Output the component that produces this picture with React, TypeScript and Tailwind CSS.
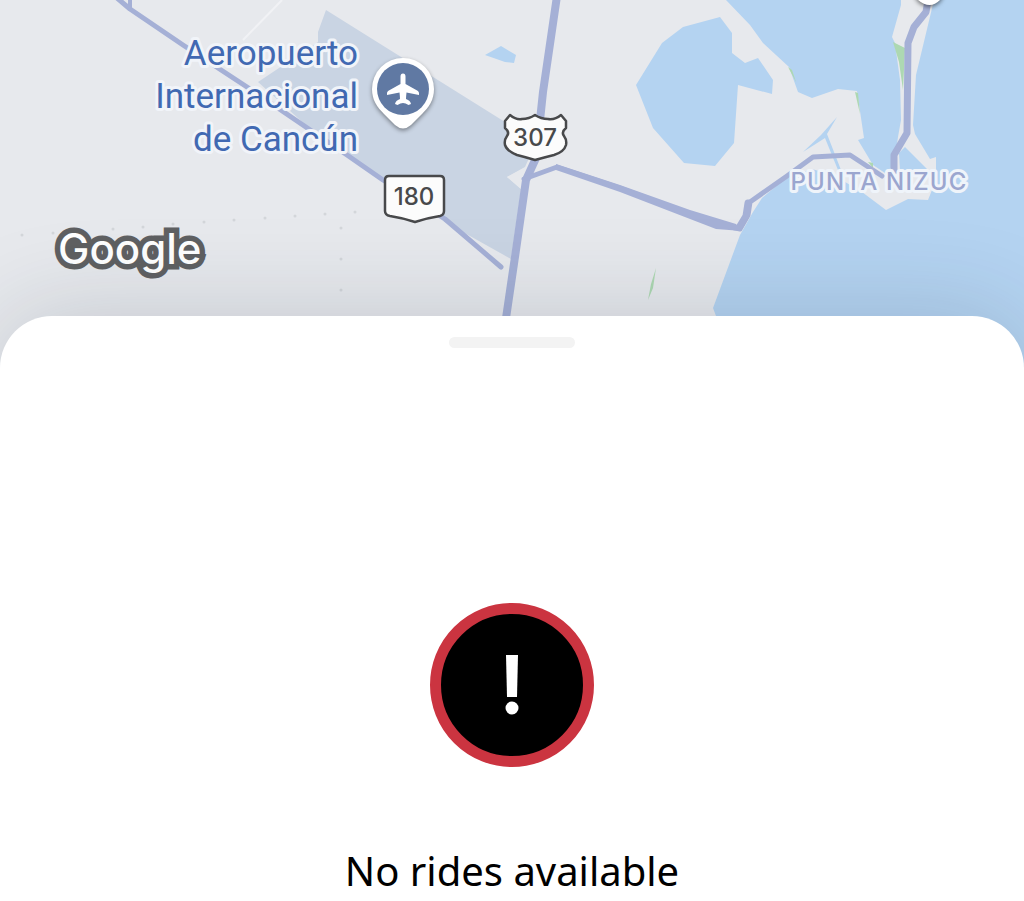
import React from "react";

const dots = [
  [22, 235], [53, 233], [83, 231], [113, 229], [143, 227], [173, 224],
  [204, 222], [234, 220], [265, 218], [295, 216], [325, 214], [355, 212],
  [341, 228], [341, 259], [341, 290],
];

const AirportPin: React.FC = () => (
  <g>
    <path
      d="M403 58a31 31 0 0 1 31 31c0 11-5 18-12 25l-11 11q-8 7-16 0l-11-11c-7-7-12-14-12-25a31 31 0 0 1 31-31z"
      className="fill-white drop-shadow-[0_2px_2px_rgba(0,0,0,0.4)]"
    />
    <circle cx="403" cy="89" r="26" className="fill-[#6079a3]" />
    <path
      d="M403 73.500q2.500 0 2.500 3v7.500l12.500 7q1.500 1.500 1 4l-12.500-2.500q-.5 4-.5 6.500 4.500 1.500 5 5l-2.500 1q-3-2-5.500-2t-5.500 2l-2.500-1q.5-3.500 5-5 0-2.500-.5-6.500l-12.500 2.500q-.5-2.500 1-4l12.500-7v-7.500q0-3 2.500-3z"
      className="fill-white"
    />
  </g>
);

const RoadShields: React.FC = () => (
  <g className="fill-[#fcfcfc] stroke-[#48494b] stroke-[2.500]" strokeLinejoin="round">
    <path d="M389 176h51q4 0 4 4v31q0 4-4 5-13 2-25 6-12-4-25-6-5-1-5-5v-31q0-4 4-4z" />
    <path d="M510 115q6 5 12 4 7 0 13-4 6 4 13 4 7 1 13-4l5 6v7q-5 4-2 8 3 4 2 9-2 7-12 10-8 2-19 5-10-3-18-5-10-4-12-10-1-5 2-9 3-4-2-8v-7z" />
  </g>
);

const CityMap: React.FC = () => {
  return (
    <svg
      viewBox="0 0 1024 380"
      className="block h-auto w-full bg-[#b4d3f1]"
      role="img"
      aria-label="Map"
    >
      {/* land */}
      <path
        d="M0 0H726L750 25 763 43 789 67 798 92 812 98 838 89 857 91 864 138 858 140 873 165 885 173 894 165 898 137 901 120 900 80 895 43 892 37 901 5V0H934L916 75 913 125 915 134 930 159 936 157V180L928 200 908 199 886 210 862 192 835 176 812 169 787 177 762 198 753 212 740 235 713 308 716 316 700 380H0z"
        className="fill-[#e7e9ed]"
      />
      <path d="M282 0L243 40" className="stroke-[#f1f2f5] stroke-2" />
      <path
        d="M326 10L505 122 535 145 525 167 507 177 521 189 511 259 445 222 384 180 320 138 258 82 318 42V32z"
        className="fill-[#c9d4e3]"
      />
      <path d="M507 177L524 168 521 189z" className="fill-[#e7e9ed]" />
      {/* lakes and inlets */}
      <g className="fill-[#b4d3f1]">
        <path d="M636 85L662 43 683 27 720 17 732 33V53L745 63 758 58 773 80 772 94 738 85 734 143 715 166 684 163 653 128z" />
        <path d="M485 55L501 46 516 55 514 63 505 62z" />
        <path d="M837 117L827 134 841 170 838 170 825 138 803 152 821 135z" />
        <path d="M905 147L928 170 900 170 899 153z" />
      </g>
      <g className="fill-[#add8b2]">
        <path d="M893 42L905 48 903 90 899 62z" />
        <path d="M788 67L796 82 792 70z" />
        <path d="M855 92L858 93 860 114z" />
        <path d="M868 162L873 163 873 168z" />
        <path d="M656 268L653 288 648 300 651 284z" />
      </g>
      {/* roads */}
      <g className="fill-none stroke-[#a5b0d6]" strokeLinejoin="round" strokeLinecap="round">
        <path d="M117 -2L130 9 183 45 247 87 347 155 383 180 445 219 501 267" className="stroke-[5]" />
        <path d="M130 8V-2" className="stroke-[4]" />
        <path d="M557 -4L543 92 536 158 526 180 516 250 505 325" className="stroke-[8]" />
        <path d="M524 179L557 167 620 188 717 224 740 229 748 215 750 202 787 176 813 157 850 155 882 176" className="stroke-[5]" />
        <path d="M740 226L746 216 748 203" className="stroke-[7]" />
        <path d="M894 171V155L907 133 908 43 914 27 926 12 928 0" className="stroke-[7]" />
      </g>
      <path
        d="M556 164L620 185 690 210 736 224 742 231 716 229 620 192 556 170z"
        className="fill-[#a5b0d6]"
      />
      <g className="fill-[#d3d6da]">
        {dots.map(([x, y]) => (
          <circle key={`${x}-${y}`} cx={x} cy={y} r="1.500" />
        ))}
      </g>
      <path
        d="M898 -34h62l-20 34q-10 10-22 0z"
        className="fill-white drop-shadow-[0_2px_2px_rgba(0,0,0,0.5)]"
      />
      <AirportPin />
      <RoadShields />
      {/* labels */}
      <g
        textAnchor="middle"
        className="fill-[#48494b] font-['Inter',sans-serif] text-[24px] font-medium"
      >
        <text x="414" y="205">180</text>
        <text x="535" y="146">307</text>
      </g>
      <g
        textAnchor="end"
        strokeLinejoin="round"
        className="fill-[#4169b2] stroke-[#f1f4f9] stroke-[6] font-['Roboto',sans-serif] text-[35px] [paint-order:stroke]"
      >
        <text x="358" y="65">Aeropuerto</text>
        <text x="358" y="108">Internacional</text>
        <text x="358" y="151">de Cancún</text>
      </g>
      <text
        x="879"
        y="190"
        textAnchor="middle"
        strokeLinejoin="round"
        className="fill-[#9ba6cf] stroke-[#eff4fa] stroke-[6] font-['Inter',sans-serif] text-[24px] font-medium tracking-wider [paint-order:stroke]"
      >
        PUNTA NIZUC
      </text>
      <text
        x="58"
        y="264"
        className="fill-white stroke-[#5f6062] stroke-[11] font-['Inter',sans-serif] text-[42px] font-medium [paint-order:stroke]"
      >
        Google
      </text>
    </svg>
  );
};

const AlertIcon: React.FC = () => (
  <svg viewBox="0 0 164 164" className="size-41" aria-hidden="true">
    <circle cx="82" cy="82" r="76.500" className="fill-black stroke-[#cb3440] stroke-[11]" />
    <path d="M76 52h12l-1 42h-10z" className="fill-white" />
    <circle cx="82" cy="105" r="6.500" className="fill-white" />
  </svg>
);

const App: React.FC = () => {
  return (
    <main className="flex min-h-screen flex-col overflow-hidden bg-white">
      <CityMap />
      <section className="relative -mt-16 flex flex-1 flex-col items-center rounded-t-[52px] bg-white pt-[21px] shadow-[0_0_100px_rgba(30,45,60,0.18)]">
        <div className="h-[11px] w-[126px] rounded-full bg-[#f3f3f3]" />
        <div className="mt-[255px]">
          <AlertIcon />
        </div>
        <h1 className="mt-[78px] font-['Noto_Sans',sans-serif] text-[40px] leading-[52px] text-black">
          No rides available
        </h1>
      </section>
    </main>
  );
};

export default App;
